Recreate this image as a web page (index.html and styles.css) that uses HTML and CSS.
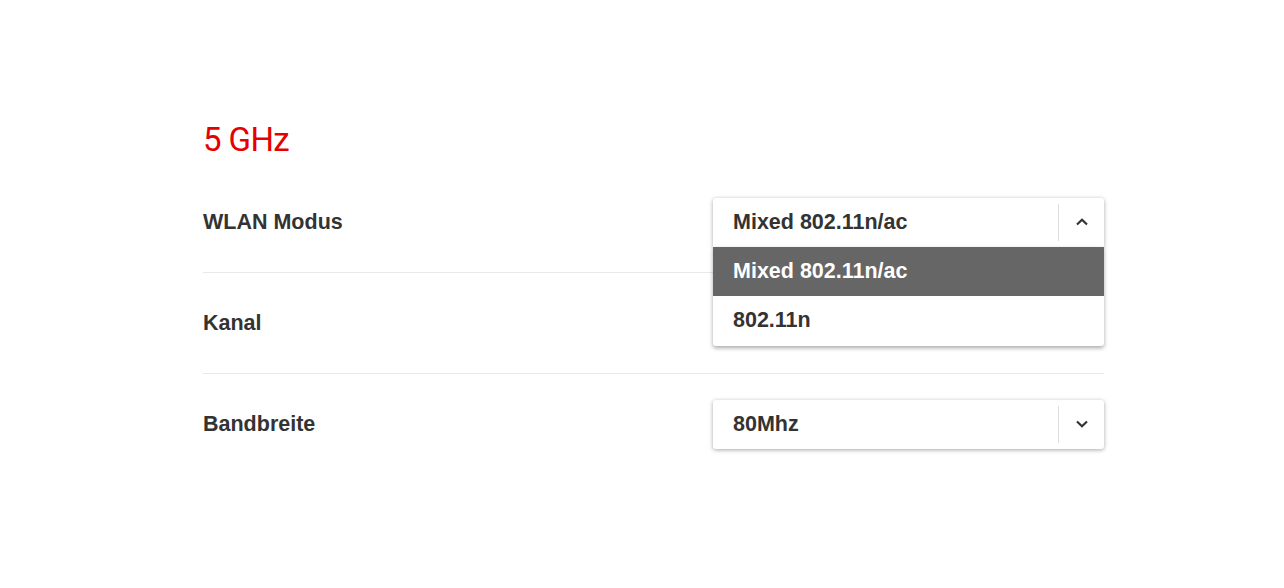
FILE: index.html
```html
<!DOCTYPE html>
<html lang="de">
<head>
<meta charset="utf-8">
<title>5 GHz</title>
<link rel="stylesheet" href="styles.css">
</head>
<body>
<main class="panel">
  <h2 class="title">5 GHz</h2>
  <div class="row">
    <span class="label">WLAN Modus</span>
    <div class="select open">
      <span class="value">Mixed 802.11n/ac</span>
      <span class="toggle">
        <svg width="14" height="10" viewBox="0 0 14 10"><path d="M2 7.5 L7 2.8 L12 7.5" fill="none" stroke="#333" stroke-width="2.2"/></svg>
      </span>
      <ul class="options">
        <li class="option selected">Mixed 802.11n/ac</li>
        <li class="option">802.11n</li>
      </ul>
    </div>
  </div>
  <div class="row">
    <span class="label">Kanal</span>
  </div>
  <div class="row last">
    <span class="label">Bandbreite</span>
    <div class="select">
      <span class="value">80Mhz</span>
      <span class="toggle">
        <svg width="14" height="10" viewBox="0 0 14 10"><path d="M2 2.5 L7 7.2 L12 2.5" fill="none" stroke="#333" stroke-width="2.2"/></svg>
      </span>
    </div>
  </div>
</main>
</body>
</html>
```
FILE: styles.css
```css
html, body {
  margin: 0;
  padding: 0;
  background: #fff;
}
body {
  font-family: "Liberation Sans", Arial, sans-serif;
  color: #333;
}
.panel {
  width: 901px;
  margin-left: 203px;
  padding-top: 123px;
}
.title {
  margin: 0;
  font-family: "Roboto", "Open Sans", sans-serif;
  font-weight: 400;
  font-size: 33px;
  letter-spacing: -0.6px;
  line-height: 33px;
  color: #e60000;
  height: 49px;
}
.row {
  display: flex;
  justify-content: space-between;
  align-items: center;
  height: 100px;
  border-bottom: 1px solid #e9e9e9;
}
.row.last {
  border-bottom: none;
}
.label {
  font-weight: 700;
  font-size: 21.5px;
}
.select {
  position: relative;
  width: 391px;
  height: 49px;
  display: flex;
  align-items: center;
  background: #fff;
  border-radius: 3px;
  box-shadow: 0 1px 4px rgba(0, 0, 0, 0.35);
  box-sizing: border-box;
}
.select.open {
  border-radius: 3px 3px 0 0;
}
.value {
  flex: 1;
  padding-left: 20px;
  font-weight: 700;
  font-size: 21.5px;
}
.toggle {
  width: 45px;
  height: 37px;
  border-left: 1px solid #ddd;
  display: flex;
  align-items: center;
  justify-content: center;
}
.options {
  position: absolute;
  left: 0;
  right: 0;
  top: 49px;
  margin: 0;
  padding: 0;
  list-style: none;
  background: #fff;
  border-radius: 0 0 3px 3px;
  box-shadow: 0 2px 4px rgba(0, 0, 0, 0.35);
  z-index: 2;
}
.option {
  height: 50px;
  display: flex;
  align-items: center;
  padding-left: 20px;
  font-weight: 700;
  font-size: 21.5px;
  color: #333;
}
.option.selected {
  background: #666;
  color: #fff;
  height: 49px;
}
```
